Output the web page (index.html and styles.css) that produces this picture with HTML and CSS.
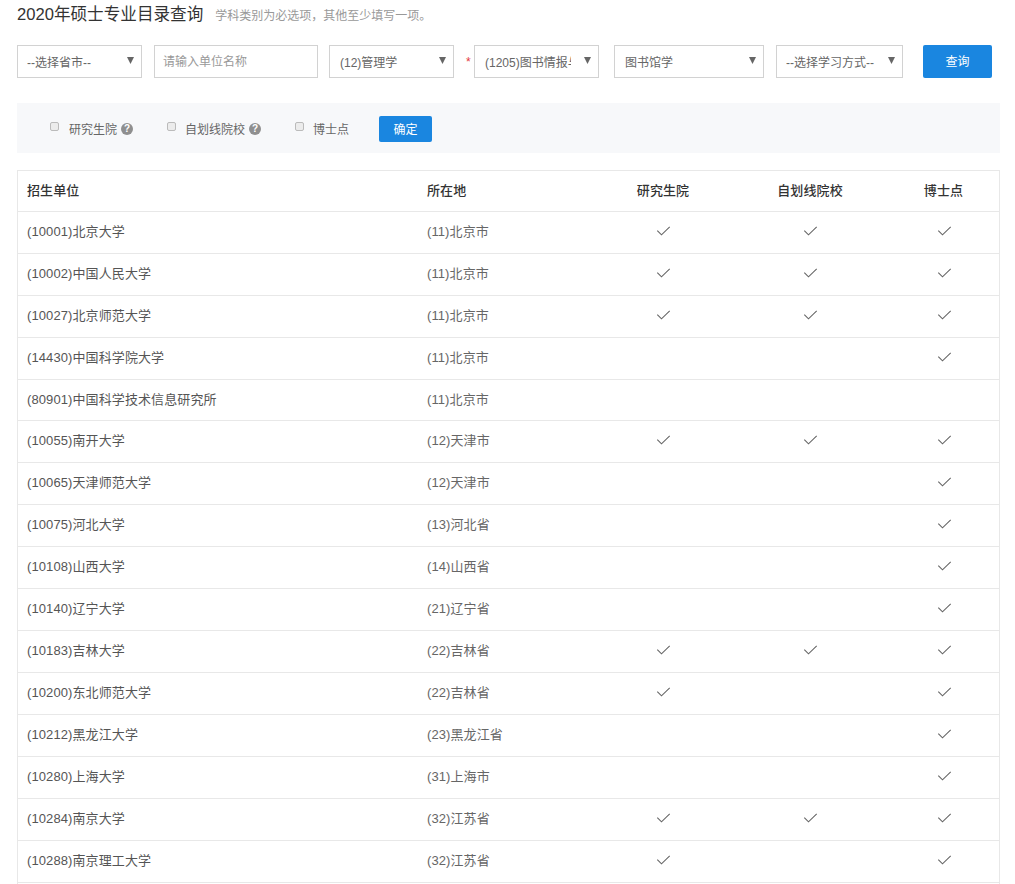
FILE: index.html
```html
<!DOCTYPE html>
<html lang="zh-CN">
<head>
<meta charset="utf-8">
<title>2020年硕士专业目录查询</title>
<link rel="stylesheet" href="styles.css">
</head>
<body>
<svg class="defs" width="0" height="0" aria-hidden="true">
  <symbol id="chk" viewBox="0 0 14 10"><path d="M0.8 4.6 L5 8.8 L13.2 0.8" fill="none" stroke="#666" stroke-width="1.1"/></symbol>
  <symbol id="arr" viewBox="0 0 7 7"><path d="M0 0 H7 L3.5 7 Z" fill="#666"/></symbol>
</svg>
<main class="page">
  <header class="head">
    <h1 class="title">2020年硕士专业目录查询</h1>
    <span class="hint">学科类别为必选项，其他至少填写一项。</span>
  </header>
  <form class="search">
    <div class="select w-prov"><span class="val">--选择省市--</span><svg class="arrow"><use href="#arr"/></svg></div>
    <div class="input">请输入单位名称</div>
    <div class="select w-men"><span class="val">(12)管理学</span><svg class="arrow"><use href="#arr"/></svg></div>
    <span class="star">*</span>
    <div class="select w-sub"><span class="val">(1205)图书情报与档案管理</span><svg class="arrow"><use href="#arr"/></svg></div>
    <div class="select w-maj"><span class="val">图书馆学</span><svg class="arrow"><use href="#arr"/></svg></div>
    <div class="select w-way"><span class="val">--选择学习方式--</span><svg class="arrow"><use href="#arr"/></svg></div>
    <div class="btn btn-query">查询</div>
  </form>
  <div class="filter">
    <label class="opt opt-a"><span class="box"></span>研究生院<span class="q">?</span></label>
    <label class="opt opt-b"><span class="box"></span>自划线院校<span class="q">?</span></label>
    <label class="opt opt-c"><span class="box"></span>博士点</label>
    <div class="btn btn-ok">确定</div>
  </div>
  <section class="table">
    <div class="row thead"><div>招生单位</div><div>所在地</div><div class="c">研究生院</div><div class="c">自划线院校</div><div class="c">博士点</div></div>
    <div class="row"><div class="n">(10001)北京大学</div><div>(11)北京市</div><div class="c"><svg class="ck"><use href="#chk"/></svg></div><div class="c"><svg class="ck"><use href="#chk"/></svg></div><div class="c"><svg class="ck"><use href="#chk"/></svg></div></div>
    <div class="row"><div class="n">(10002)中国人民大学</div><div>(11)北京市</div><div class="c"><svg class="ck"><use href="#chk"/></svg></div><div class="c"><svg class="ck"><use href="#chk"/></svg></div><div class="c"><svg class="ck"><use href="#chk"/></svg></div></div>
    <div class="row"><div class="n">(10027)北京师范大学</div><div>(11)北京市</div><div class="c"><svg class="ck"><use href="#chk"/></svg></div><div class="c"><svg class="ck"><use href="#chk"/></svg></div><div class="c"><svg class="ck"><use href="#chk"/></svg></div></div>
    <div class="row"><div class="n">(14430)中国科学院大学</div><div>(11)北京市</div><div class="c"></div><div class="c"></div><div class="c"><svg class="ck"><use href="#chk"/></svg></div></div>
    <div class="row row-plain"><div class="n">(80901)中国科学技术信息研究所</div><div>(11)北京市</div><div class="c"></div><div class="c"></div><div class="c"></div></div>
    <div class="row"><div class="n">(10055)南开大学</div><div>(12)天津市</div><div class="c"><svg class="ck"><use href="#chk"/></svg></div><div class="c"><svg class="ck"><use href="#chk"/></svg></div><div class="c"><svg class="ck"><use href="#chk"/></svg></div></div>
    <div class="row"><div class="n">(10065)天津师范大学</div><div>(12)天津市</div><div class="c"></div><div class="c"></div><div class="c"><svg class="ck"><use href="#chk"/></svg></div></div>
    <div class="row"><div class="n">(10075)河北大学</div><div>(13)河北省</div><div class="c"></div><div class="c"></div><div class="c"><svg class="ck"><use href="#chk"/></svg></div></div>
    <div class="row"><div class="n">(10108)山西大学</div><div>(14)山西省</div><div class="c"></div><div class="c"></div><div class="c"><svg class="ck"><use href="#chk"/></svg></div></div>
    <div class="row"><div class="n">(10140)辽宁大学</div><div>(21)辽宁省</div><div class="c"></div><div class="c"></div><div class="c"><svg class="ck"><use href="#chk"/></svg></div></div>
    <div class="row"><div class="n">(10183)吉林大学</div><div>(22)吉林省</div><div class="c"><svg class="ck"><use href="#chk"/></svg></div><div class="c"><svg class="ck"><use href="#chk"/></svg></div><div class="c"><svg class="ck"><use href="#chk"/></svg></div></div>
    <div class="row"><div class="n">(10200)东北师范大学</div><div>(22)吉林省</div><div class="c"><svg class="ck"><use href="#chk"/></svg></div><div class="c"></div><div class="c"><svg class="ck"><use href="#chk"/></svg></div></div>
    <div class="row"><div class="n">(10212)黑龙江大学</div><div>(23)黑龙江省</div><div class="c"></div><div class="c"></div><div class="c"><svg class="ck"><use href="#chk"/></svg></div></div>
    <div class="row"><div class="n">(10280)上海大学</div><div>(31)上海市</div><div class="c"></div><div class="c"></div><div class="c"><svg class="ck"><use href="#chk"/></svg></div></div>
    <div class="row"><div class="n">(10284)南京大学</div><div>(32)江苏省</div><div class="c"><svg class="ck"><use href="#chk"/></svg></div><div class="c"><svg class="ck"><use href="#chk"/></svg></div><div class="c"><svg class="ck"><use href="#chk"/></svg></div></div>
    <div class="row"><div class="n">(10288)南京理工大学</div><div>(32)江苏省</div><div class="c"><svg class="ck"><use href="#chk"/></svg></div><div class="c"></div><div class="c"><svg class="ck"><use href="#chk"/></svg></div></div>
    <div class="row"></div>
  </section>
</main>
</body>
</html>
```
FILE: styles.css
```css
* { box-sizing: border-box; }
html, body { margin: 0; padding: 0; background: #fff; }
body {
  font-family: "Liberation Sans", "Noto Sans CJK SC", sans-serif;
  font-size: 12px;
  color: #666;
  overflow: hidden;
}
.defs { display: block; height: 0; }
.page { padding: 0 15px 0 17px; width: 1015px; }

.head { display: flex; align-items: baseline; height: 45px; padding-top: 3px; }
.title { margin: 0; font-size: 16.6px; line-height: 24px; font-weight: 400; color: #333; }
.hint { margin-left: 12px; font-size: 12px; color: #999; }

.search { display: flex; align-items: center; height: 33px; }
.select, .input {
  height: 33px;
  border: 1px solid #d2d2d2;
  background: #fff;
  display: flex;
  align-items: center;
  flex: none;
}
.select { padding: 0 7px 0 10px; color: #666; }
.val { flex: 1; min-width: 0; overflow: hidden; white-space: nowrap; }
.arrow { width: 7px; height: 7px; flex: none; margin-left: 8px; margin-top: -3px; }
.input { width: 164px; margin: 0 11px 0 12px; padding: 0 8px 3px; color: #999; }
.w-prov { width: 125px; padding-left: 9px; }
.w-men { width: 125px; }
.star { width: 20px; padding-left: 12px; color: #e4393c; font-size: 12px; }
.w-sub { width: 125px; }
.w-sub .val { margin-right: 5px; }
.w-maj { width: 150px; margin-left: 15px; }
.w-way { width: 127px; margin-left: 12px; padding-left: 9px; }
.btn {
  background: #1a86e0;
  color: #fff;
  border-radius: 2px;
  display: flex;
  align-items: center;
  justify-content: center;
  flex: none;
  padding-bottom: 2px;
}
.btn-query { width: 69px; height: 33px; margin-left: 20px; }

.filter {
  display: flex;
  align-items: center;
  height: 50px;
  margin-top: 25px;
  background: #f7f8fa;
}
.opt { display: flex; align-items: center; color: #666; flex: none; }
.opt-a { margin-left: 33px; width: 117px; }
.opt-b { width: 128px; }
.opt-c { width: 84px; }
.box {
  width: 9px;
  height: 9px;
  margin: -3px 9px 0 0;
  border: 1px solid #bbb;
  border-radius: 2px;
  background: #ececec;
  flex: none;
}
.opt-a .box { margin-right: 10px; }
.q {
  width: 12px;
  height: 12px;
  margin: 1px 0 0 4px;
  border-radius: 50%;
  background: #8f8f8f;
  color: #fff;
  font-size: 10px;
  font-weight: 700;
  line-height: 12px;
  text-align: center;
}
.btn-ok { width: 53px; height: 26px; margin-top: 2px; }

.table { margin-top: 17px; border: 1px solid #e8e8e8; border-bottom: 0; }
.row {
  display: grid;
  grid-template-columns: 399px 177px 138px 156px 111px;
  align-items: center;
  height: 42px;
  border-bottom: 1px solid #e8e8e8;
  font-size: 13px;
  letter-spacing: 0.1px;
  color: #555;
}
.row > div:first-child { padding-left: 9px; padding-bottom: 5px; }
.row > div:nth-child(2) { padding-left: 10px; padding-bottom: 5px; color: #666; }
.thead { height: 41px; color: #333; font-weight: 500; }
.thead > div:first-child, .thead > div:nth-child(2),
.row-plain > div:first-child, .row-plain > div:nth-child(2) { padding-bottom: 3px; }
.thead > div:nth-child(2) { color: #333; }
.row-plain { height: 41px; }
.c { text-align: center; display: flex; justify-content: center; padding-bottom: 3px; }
.ck { width: 14px; height: 10px; display: block; transform: translateX(0.5px); }
```
